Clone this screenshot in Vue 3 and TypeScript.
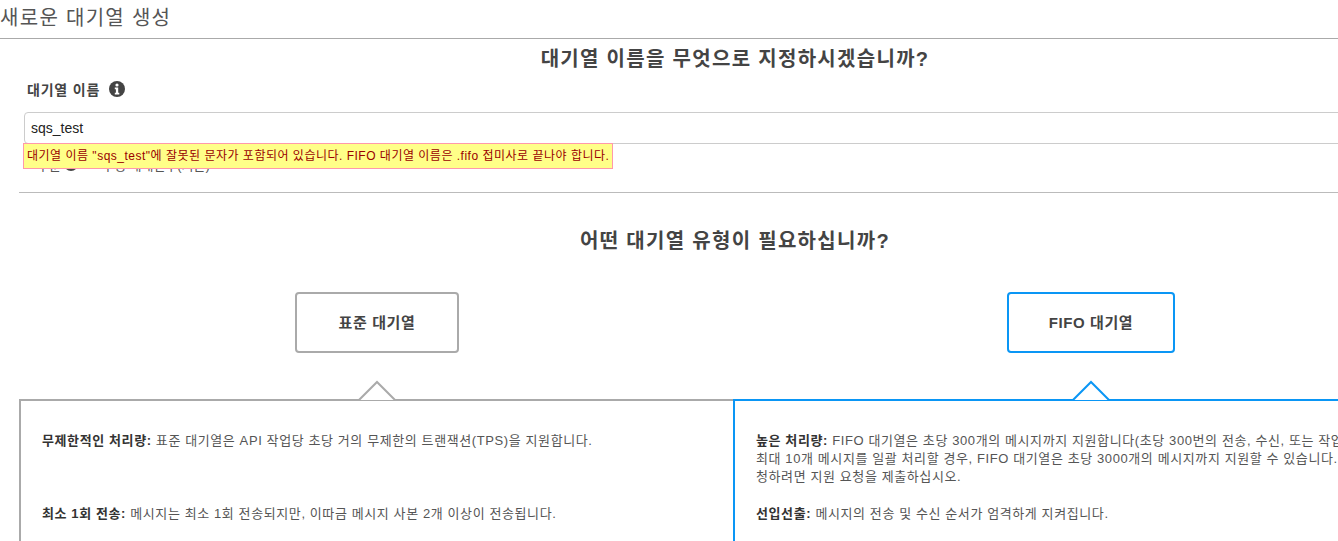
<template>
  <div class="viewport">
    <div class="page">
      <h1 class="page-title">새로운 대기열 생성</h1>

      <section class="content">
        <h2 class="question name-question">대기열 이름을 무엇으로 지정하시겠습니까?</h2>

        <div class="name-label">
          <span>대기열 이름</span>
          <svg class="info" viewBox="0 0 16 16">
            <circle cx="8" cy="8" r="8" fill="#444" />
            <circle cx="8" cy="4" r="1.6" fill="#fff" />
            <path d="M5.8 6.6h3.4v5.2h1.1v1.6H5.8v-1.6h1.1V8.2H5.8z" fill="#fff" />
          </svg>
        </div>

        <div class="name-field">
          <input class="name-input" type="text" value="sqs_test" />
          <div class="error-tip">{{ errorText }}</div>
        </div>

        <div class="region-row">
          <span>구분</span>
          <span class="region-dot" />
          <span class="region-text">구성 매개변수(기본)</span>
        </div>

        <hr class="divider" />

        <h2 class="question type-question">어떤 대기열 유형이 필요하십니까?</h2>

        <div class="types">
          <div v-for="type in queueTypes" :key="type.name" class="type" :class="{ selected: type.selected }">
            <button class="type-button" type="button">{{ type.name }}</button>

            <div class="panel">
              <svg class="notch" viewBox="0 0 36 20">
                <path class="notch-fill" d="M0 19L18 1l18 18z" />
                <path class="notch-line" d="M0 19L18 1l18 18" />
              </svg>
              <p v-for="item in type.items" :key="item.title" class="feature">
                <strong>{{ item.title }}:</strong> {{ item.text }}
              </p>
            </div>
          </div>
        </div>
      </section>
    </div>
  </div>
</template>

<script setup lang="ts">
const errorText =
  '대기열 이름 "sqs_test"에 잘못된 문자가 포함되어 있습니다. FIFO 대기열 이름은 .fifo 접미사로 끝나야 합니다.';

const queueTypes = [
  {
    name: '표준 대기열',
    selected: false,
    items: [
      { title: '무제한적인 처리량', text: '표준 대기열은 API 작업당 초당 거의 무제한의 트랜잭션(TPS)을 지원합니다.' },
      { title: '최소 1회 전송', text: '메시지는 최소 1회 전송되지만, 이따금 메시지 사본 2개 이상이 전송됩니다.' }
    ]
  },
  {
    name: 'FIFO 대기열',
    selected: true,
    items: [
      {
        title: '높은 처리량',
        // joiners keep "최대 10개" together at the line break
        text: 'FIFO 대기열은 초당 300개의 메시지까지 지원합니다(초당 300번의 전송, 수신, 또는 작업). 작업당 최\u2060대\u00a010개 메시지를 일괄 처리할 경우, FIFO 대기열은 초당 3000개의 메시지까지 지원할 수 있습니다. 한도 증가를 요청하려면 지원 요청을 제출하십시오.'
      },
      { title: '선입선출', text: '메시지의 전송 및 수신 순서가 엄격하게 지켜집니다.' }
    ]
  }
];
</script>

<style>
html,
body {
  margin: 0;
  background: #fff;
  overflow: hidden;
}
</style>

<style scoped>
.viewport {
  width: 1338px;
  height: 541px;
  overflow: hidden;
}

.page {
  width: 1470px;
  font-family: "Liberation Sans", "Noto Sans CJK KR", sans-serif;
  color: #444;
}

.page-title {
  margin: 0;
  height: 38px;
  border-bottom: 1px solid #aaa;
  font-size: 20px;
  font-weight: 400;
  letter-spacing: 1.3px;
  line-height: 37px;
  color: #555;
}

.content {
  padding: 0 19px;
}

.question {
  margin: 0;
  font-size: 20px;
  font-weight: 700;
  letter-spacing: 1.3px;
  line-height: 24px;
  text-align: center;
  color: #444;
}

.name-question {
  padding-top: 8px;
}

.name-label {
  display: flex;
  align-items: center;
  gap: 9px;
  margin: 6px 0 0 8px;
  height: 24px;
  font-size: 14px;
  font-weight: 700;
  letter-spacing: 0.8px;
}

.info {
  width: 16px;
  height: 16px;
}

.name-field {
  position: relative;
  margin: 11px 0 0 5px;
}

.name-input {
  display: block;
  box-sizing: border-box;
  width: 100%;
  height: 32px;
  padding: 0 6px;
  border: 1px solid #ccc;
  border-radius: 4px;
  font-family: inherit;
  font-size: 14px;
  color: #222;
  outline: none;
}

.error-tip {
  position: absolute;
  top: 31px;
  left: -1px;
  box-sizing: border-box;
  height: 26px;
  padding: 0 3px;
  border: 1px solid #f9a;
  background: #ff8;
  font-size: 12px;
  letter-spacing: 0.5px;
  line-height: 24px;
  white-space: nowrap;
  color: #900;
}

.region-row {
  display: flex;
  align-items: center;
  gap: 3px;
  height: 16px;
  margin: 12px 0 0 18px;
  font-size: 13px;
  color: #555;
}

.region-dot {
  width: 14px;
  height: 14px;
  border-radius: 50%;
  background: #444;
}

.region-text {
  margin-left: 21px;
}

.divider {
  margin: 20px 0 0;
  border: 0;
  border-top: 1px solid #bbb;
}

.type-question {
  padding-top: 36px;
}

.types {
  display: grid;
  grid-template-columns: 714px 714px;
  margin-top: 39px;
}

.type {
  display: flex;
  flex-direction: column;
  align-items: center;
  min-width: 0;
}

.type-button {
  width: 164px;
  height: 61px;
  margin-left: 2px;
  padding-bottom: 3px;
  border: 2px solid #aaa;
  border-radius: 4px;
  background: #fff;
  font-family: inherit;
  font-size: 15px;
  font-weight: 700;
  letter-spacing: 0.6px;
  color: #444;
}

.selected .type-button {
  width: 168px;
  border-color: #0a96f5;
}

.panel {
  position: relative;
  box-sizing: border-box;
  width: 100%;
  height: 200px;
  margin-top: 46px;
  padding: 31px 16px 0 21px;
  border-top: 2px solid #aaa;
  border-left: 2px solid #aaa;
}

.selected .panel {
  z-index: 1;
  border-color: #0a96f5;
}

.notch {
  position: absolute;
  top: -20px;
  left: 50%;
  width: 36px;
  height: 20px;
  margin-left: -18px;
  overflow: visible;
}

.notch-fill {
  fill: #fff;
}

.notch-line {
  fill: none;
  stroke: #aaa;
  stroke-width: 2;
}

.selected .notch-line {
  stroke: #0a96f5;
}

.feature {
  box-sizing: border-box;
  min-height: 73px;
  margin: 0;
  font-size: 13px;
  letter-spacing: 0.6px;
  line-height: 18px;
  color: #555;
}

.feature strong {
  color: #333;
}
</style>
